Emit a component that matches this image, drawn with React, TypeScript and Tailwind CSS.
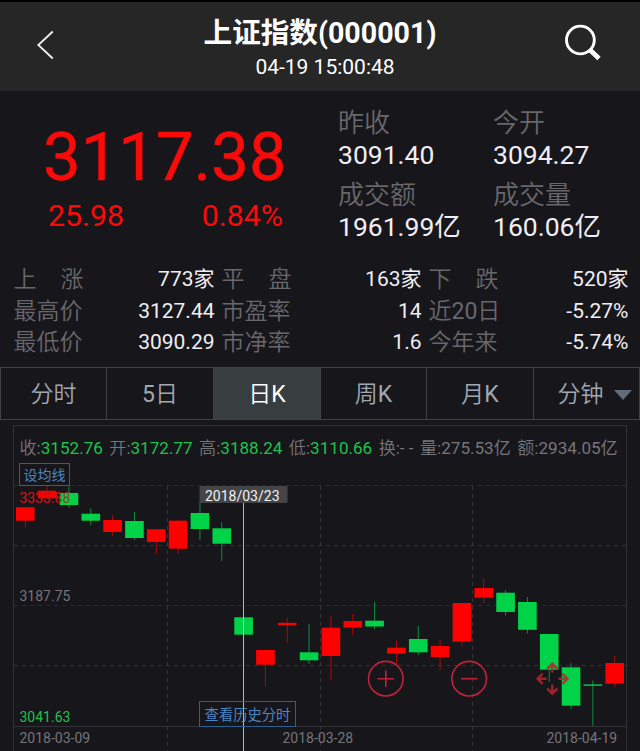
import { useState } from 'react';
import clsx from 'clsx';

type Candle = {
  open: number;
  close: number;
  high: number;
  low: number;
  up: boolean;
};

// y positions of body top / body bottom / wick top / wick bottom
const c = (open: number, close: number, high: number, low: number, up: boolean): Candle => ({
  open,
  close,
  high,
  low,
  up,
});

const CANDLES: Candle[] = [
  c(507.3, 520.7, 507, 527.5, true),
  c(490.7, 498.3, 486, 499, true),
  c(493, 505, 486, 507.5, false),
  c(513.7, 520.7, 508.5, 525, false),
  c(520, 532, 515, 536, true),
  c(521, 538, 512, 540, false),
  c(529.3, 542, 529, 554.5, true),
  c(520.7, 548.7, 520, 554, true),
  c(513, 529, 502, 540, false),
  c(528.3, 543.7, 522, 561, false),
  c(617.3, 634.7, 617, 668, false),
  c(650, 664.7, 650, 686.5, true),
  c(622.8, 625, 617.5, 643, true),
  c(652.3, 660.3, 624, 664, false),
  c(627.7, 656, 616, 680.5, true),
  c(621, 627.7, 614, 635, true),
  c(620.7, 626.5, 602, 629.5, false),
  c(647.7, 653.7, 640.5, 664, true),
  c(639, 652.3, 626, 655, false),
  c(646, 657, 640, 670, true),
  c(603, 641.7, 603, 646, true),
  c(588, 597.7, 578.5, 603, true),
  c(592.7, 612, 590, 615.5, false),
  c(602, 629.8, 597, 633.5, false),
  c(634, 669.7, 634, 682, false),
  c(667.3, 705.7, 663, 709, false),
  c(684.4, 685.8, 680.5, 726, false),
  c(663, 683.7, 656, 687, true),
];

const FIRST_X = 25.3;
const STEP = 21.83;
const BODY_WIDTH = 18.6;

const QUOTES = [
  { label: '昨收', value: '3091.40' },
  { label: '今开', value: '3094.27' },
  { label: '成交额', value: '1961.99亿' },
  { label: '成交量', value: '160.06亿' },
];

const DETAILS = [
  { label: '上涨', value: '773家' },
  { label: '平盘', value: '163家' },
  { label: '下跌', value: '520家' },
  { label: '最高价', value: '3127.44' },
  { label: '市盈率', value: '14' },
  { label: '近20日', value: '-5.27%' },
  { label: '最低价', value: '3090.29' },
  { label: '市净率', value: '1.6' },
  { label: '今年来', value: '-5.74%' },
];

const TABS = ['分时', '5日', '日K', '周K', '月K', '分钟'];

const OHLC = [
  { label: '收', value: '3152.76', green: true },
  { label: '开', value: '3172.77', green: true },
  { label: '高', value: '3188.24', green: true },
  { label: '低', value: '3110.66', green: true },
  { label: '换', value: '- -', green: false },
  { label: '量', value: '275.53亿', green: false },
  { label: '额', value: '2934.05亿', green: false },
];

// thin Chinese glyphs, regular latin letters and digits
function Mixed({ text }: { text: string }) {
  return (
    <span className="font-[350]">
      {text.split(/([0-9A-Z]+)/).map((part, i) =>
        i % 2 === 1 ? (
          <span key={i} className="font-normal">
            {part}
          </span>
        ) : (
          part
        ),
      )}
    </span>
  );
}

function Header() {
  return (
    <header className="flex h-[91px] items-start justify-between border-t-2 border-black bg-[#262626] text-white">
      <button className="ml-9 mt-7" aria-label="返回">
        <svg width="20" height="32" viewBox="0 0 20 32" fill="none" stroke="#f0f0f0" strokeWidth="1.8">
          <path d="M16.8 1.5 L2.3 15 L16.8 28.5" />
        </svg>
      </button>
      <div className="ml-[20px] mt-[14px] flex flex-col items-center">
        <h1 className="text-[28.6px] font-bold leading-[34px]">上证指数(000001)</h1>
        <p className="ml-[10px] mt-[4px] text-[21px] leading-[26px]">04-19 15:00:48</p>
      </div>
      <button className="mr-[36px] mt-[20px]" aria-label="搜索">
        <svg width="40" height="42" viewBox="0 0 40 42" fill="none" stroke="#fff">
          <circle cx="16.4" cy="18" r="13.9" strokeWidth="2.9" />
          <path d="M26 28 L35 36.5" strokeWidth="4.8" />
        </svg>
      </button>
    </header>
  );
}

function Summary() {
  return (
    <section className="flex h-[172px] pt-[16px]">
      <div className="ml-[42px] w-[245px] text-[#fb0a0a]">
        <div className="mt-[8px] pl-px text-[67px] leading-[84px] [-webkit-text-stroke:0.5px_#fb0a0a]">3117.38</div>
        <div className="flex justify-between pl-[6px] pr-[4px] text-[30.3px] leading-[34px]">
          <span>25.98</span>
          <span>0.84%</span>
        </div>
      </div>
      <div className="ml-[51px] grid grid-cols-[155px_auto] content-start gap-y-[8px]">
        {QUOTES.map((q) => (
          <div key={q.label} className="leading-[32px]">
            <div className="text-[26px] text-[#68686c]">
              <Mixed text={q.label} />
            </div>
            <div className="text-[26.5px] text-[#f0eef4]">{q.value}</div>
          </div>
        ))}
      </div>
    </section>
  );
}

function Details() {
  return (
    <section className="grid h-[104px] grid-cols-[201px_200px_200px] content-start gap-x-[7px] pl-[13.5px] pt-px leading-[31.5px]">
      {DETAILS.map((d) => (
        <div key={d.label} className="flex justify-between">
          <span className="flex w-[70px] justify-between whitespace-nowrap text-[23px] text-[#68686c]">
            {d.label.length === 2 ? (
              d.label.split('').map((ch) => <Mixed key={ch} text={ch} />)
            ) : (
              <Mixed text={d.label} />
            )}
          </span>
          <span className="text-[21px] text-[#f0eef4]">{d.value}</span>
        </div>
      ))}
    </section>
  );
}

function Chart() {
  return (
    <section className="relative h-[331px]">
      <svg className="absolute inset-0" width="640" height="331" viewBox="0 420 640 331">
        <path d="M13.5 751 V425.5 H626.5 V751 M13.5 726.5 H626.5" fill="none" stroke="#313136" />
        <g stroke="#313137" strokeDasharray="4 4">
          {[486, 546, 606, 666].map((y) => (
            <path key={y} d={`M14 ${y - 0.5} H626`} opacity={y % 120 === 6 ? 0.7 : 1} />
          ))}
          {[167, 320, 472].map((x) => (
            <path key={x} d={`M${x}.5 486 V751`} />
          ))}
        </g>

        <text x="19.5" y="502.5" fontSize="14" fill="#d81414">3333.88</text>

        {CANDLES.map((k, i) => {
          const x = FIRST_X + i * STEP;
          const color = k.up ? '#ff0000' : '#00d348';
          return (
            <g key={i}>
              <path d={`M${x} ${k.high} V${k.low}`} stroke={color} opacity="0.65" />
              <rect x={x - BODY_WIDTH / 2} y={k.open} width={BODY_WIDTH} height={k.close - k.open} fill={color} />
            </g>
          );
        })}

        {/* high label stays readable over the first candles */}
        <text x="19.5" y="502.5" fontSize="14" fill="#b01818" opacity="0.75">3333.88</text>
        <g fontSize="14" fill="#75757a">
          <text x="19.5" y="601">3187.75</text>
          <text x="19.5" y="721.5" fill="#1fc24c">3041.63</text>
          <text x="19.5" y="743">2018-03-09</text>
          <text x="282.5" y="743">2018-03-28</text>
          <text x="546.5" y="743">2018-04-19</text>
        </g>

        {/* crosshair */}
        <path d="M243.5 486 V751" stroke="#b9b9bb" />
        <rect x="199.5" y="486" width="88" height="17" fill="#454548" />
        <text x="205" y="500.7" fontSize="14" fill="#f2f2f2">2018/03/23</text>

        {/* zoom and move controls */}
        <g fill="none" stroke="#c02238" strokeWidth="1.6">
          <circle cx="385.8" cy="678.7" r="17.3" />
          <path d="M377.5 678.7 H394 M385.8 670.5 V687" />
          <circle cx="469.2" cy="678.7" r="17.3" />
          <path d="M461 678.7 H477.5" />
        </g>
        <g fill="none" stroke="#b3262f" strokeWidth="2.5" opacity="0.85">
          <path d="M552.3 664 V672.5 M547.2 669 L552.3 663.8 L557.4 669" />
          <path d="M552.3 694 V684.5 M547.2 688.5 L552.3 693.7 L557.4 688.5" />
          <path d="M538 678.8 H546.5 M542.7 673.7 L537.6 678.8 L542.7 683.9" />
          <path d="M567.5 678.8 H558.5 M562.3 673.7 L567.4 678.8 L562.3 683.9" />
        </g>
      </svg>

      <div className="relative flex gap-[6.4px] whitespace-nowrap pl-[19.5px] pt-[17px] text-[17.1px] leading-[22px] text-[#75757a]">
        {OHLC.map((o) => (
          <span key={o.label}>
            <Mixed text={o.label} />:
            <span className={clsx(o.green && 'text-[#1fc24c]')}>{o.value}</span>
          </span>
        ))}
      </div>
      <button className="absolute left-[19px] top-[43px] flex h-[23px] w-[51px] items-center justify-center border border-[#2f5f92] pt-0.5 text-[14px] text-[#4a86c4]">
        设均线
      </button>
      <button className="absolute left-[199px] top-[281px] flex h-[26px] w-[97px] items-center justify-center border border-[#2f5f92] pt-[3px] text-[14.3px] text-[#4a86c4]">
        查看历史分时
      </button>
    </section>
  );
}

export default function App() {
  const [activeTab, setActiveTab] = useState('日K');

  return (
    <main className="h-[751px] w-[640px] overflow-hidden bg-[#17161b] font-[Roboto,'Noto_Sans_CJK_SC',sans-serif]">
      <Header />
      <Summary />
      <Details />
      <nav className="grid h-[53px] grid-cols-[106px_107px_107px_106px_107px_1fr] border border-[#3f4246] border-r-0">
        {TABS.map((tab) => (
          <button
            key={tab}
            onClick={() => setActiveTab(tab)}
            className={clsx(
              'flex items-center justify-center border-r border-[#3f4246] pt-[3px] text-[23px]',
              tab === activeTab ? 'bg-[#383d40] text-white' : 'text-[#a0a8b2]',
            )}
          >
            <Mixed text={tab} />
            {tab === '分钟' && (
              <svg className="-mr-4 ml-[10px]" width="18" height="10" viewBox="0 0 18 10" fill="#626c77">
                <path d="M0 0 H18 L9 10 Z" />
              </svg>
            )}
          </button>
        ))}
      </nav>
      <Chart />
    </main>
  );
}
